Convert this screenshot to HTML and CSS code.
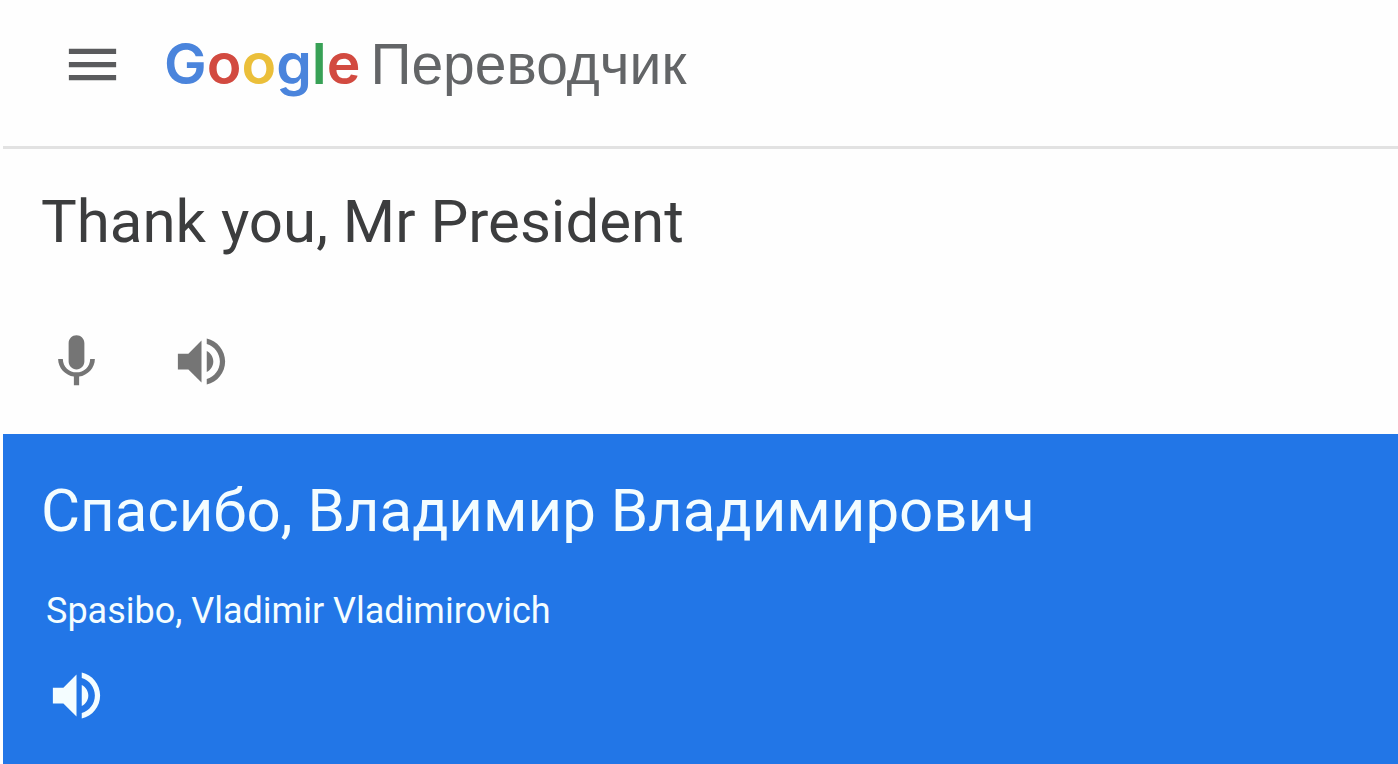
FILE: index.html
```html
<!DOCTYPE html>
<html lang="ru">
<head>
    <meta charset="UTF-8">
    <meta name="viewport" content="width=device-width, initial-scale=1.0">
    <title>Google Переводчик</title>
    <link rel="stylesheet" href="styles.css">
</head>
<body>
    <header class="header">
        <button class="icon-btn menu-btn" type="button" aria-label="Меню">
            <svg class="icon" viewBox="0 0 24 24"><path d="M3 18h18v-2H3v2zm0-5h18v-2H3v2zm0-7v2h18V6H3z"/></svg>
        </button>
        <a class="brand" href="#">
            <span class="logo"><span class="blue">G</span><span class="red">o</span><span class="yellow">o</span><span class="blue">g</span><span class="green">l</span><span class="red">e</span></span>
            <span class="product">Переводчик</span>
        </a>
    </header>

    <main>
        <section class="panel source">
            <p class="text">Thank you, Mr President</p>
            <div class="actions">
                <button class="icon-btn" type="button" aria-label="Голосовой ввод">
                    <svg class="icon" viewBox="0 0 24 24"><path d="M12 15c1.66 0 3-1.34 3-3V5c0-1.66-1.34-3-3-3S9 3.34 9 5v7c0 1.66 1.34 3 3 3zm5.2-4c0 3-2.44 5.1-5.2 5.1S6.8 14 6.8 11H5c0 3.41 2.72 6.23 6 6.72V21h2v-3.28c3.28-.48 6-3.3 6-6.72h-1.8z"/></svg>
                </button>
                <button class="icon-btn" type="button" aria-label="Прослушать">
                    <svg class="icon" viewBox="0 0 24 24"><path d="M3 9v6h4l5 5V4L7 9H3zm13.5 3c0-1.77-1.02-3.29-2.5-4.03v8.05c1.48-.73 2.5-2.25 2.5-4.02zM14 3.23v2.06c2.89.86 5 3.54 5 6.71s-2.11 5.85-5 6.71v2.06c4.01-.91 7-4.49 7-8.77s-2.99-7.86-7-8.77z"/></svg>
                </button>
            </div>
        </section>

        <section class="panel result">
            <p class="text">Спасибо, Владимир Владимирович</p>
            <p class="translit">Spasibo, Vladimir Vladimirovich</p>
            <div class="actions">
                <button class="icon-btn" type="button" aria-label="Прослушать перевод">
                    <svg class="icon" viewBox="0 0 24 24"><path d="M3 9v6h4l5 5V4L7 9H3zm13.5 3c0-1.77-1.02-3.29-2.5-4.03v8.05c1.48-.73 2.5-2.25 2.5-4.02zM14 3.23v2.06c2.89.86 5 3.54 5 6.71s-2.11 5.85-5 6.71v2.06c4.01-.91 7-4.49 7-8.77s-2.99-7.86-7-8.77z"/></svg>
                </button>
            </div>
        </section>
    </main>
</body>
</html>
```
FILE: styles.css
```css
* {
    margin: 0;
    padding: 0;
    box-sizing: border-box;
}

body {
    display: flex;
    flex-direction: column;
    min-height: 100vh;
    padding-left: 3px;
    background: #fefefe;
    font-family: Roboto, "Liberation Sans", sans-serif;
}

/* Header */
.header {
    display: flex;
    align-items: center;
    gap: 40px;
    padding: 29px 58px 47px;
    border-bottom: 3px solid #e2e2e2;
}

.brand {
    display: flex;
    align-items: baseline;
    gap: 10px;
    line-height: 70px;
    text-decoration: none;
}

.logo {
    font-family: Inter, Roboto, sans-serif;
    font-size: 57px;
    font-weight: 600;
}

.product {
    font-family: "Liberation Sans", Arial, sans-serif;
    font-size: 57px;
    color: #636567;
}

.blue { color: #4a84dc; }
.red { color: #d24a40; }
.yellow { color: #ebbf3a; }
.green { color: #38a156; }

/* Icon buttons */
.icon-btn {
    display: block;
    border: none;
    background: none;
    color: #757575;
    cursor: pointer;
}

.menu-btn {
    color: #5a5b5d;
}

.icon {
    display: block;
    width: 63px;
    height: 63px;
    fill: currentColor;
}

/* Panels */
main {
    display: flex;
    flex-direction: column;
    flex: 1;
}

.panel {
    padding: 38px;
}

.text {
    font-size: 60px;
    line-height: 70px;
}

.actions {
    display: flex;
    gap: 62px;
    padding-left: 4px;
}

.source {
    padding-bottom: 41px;
    color: #3c3d3e;
}

.source .actions {
    margin-top: 73px;
}

.result {
    flex: 1;
    padding-top: 42px;
    background: #2276e7;
    color: #f4fdff;
}

.translit {
    margin-top: 44px;
    padding-left: 5px;
    font-size: 36px;
    line-height: 42px;
}

.result .actions {
    margin-top: 32px;
}

.result .icon-btn {
    color: #f4fdff;
}
```
